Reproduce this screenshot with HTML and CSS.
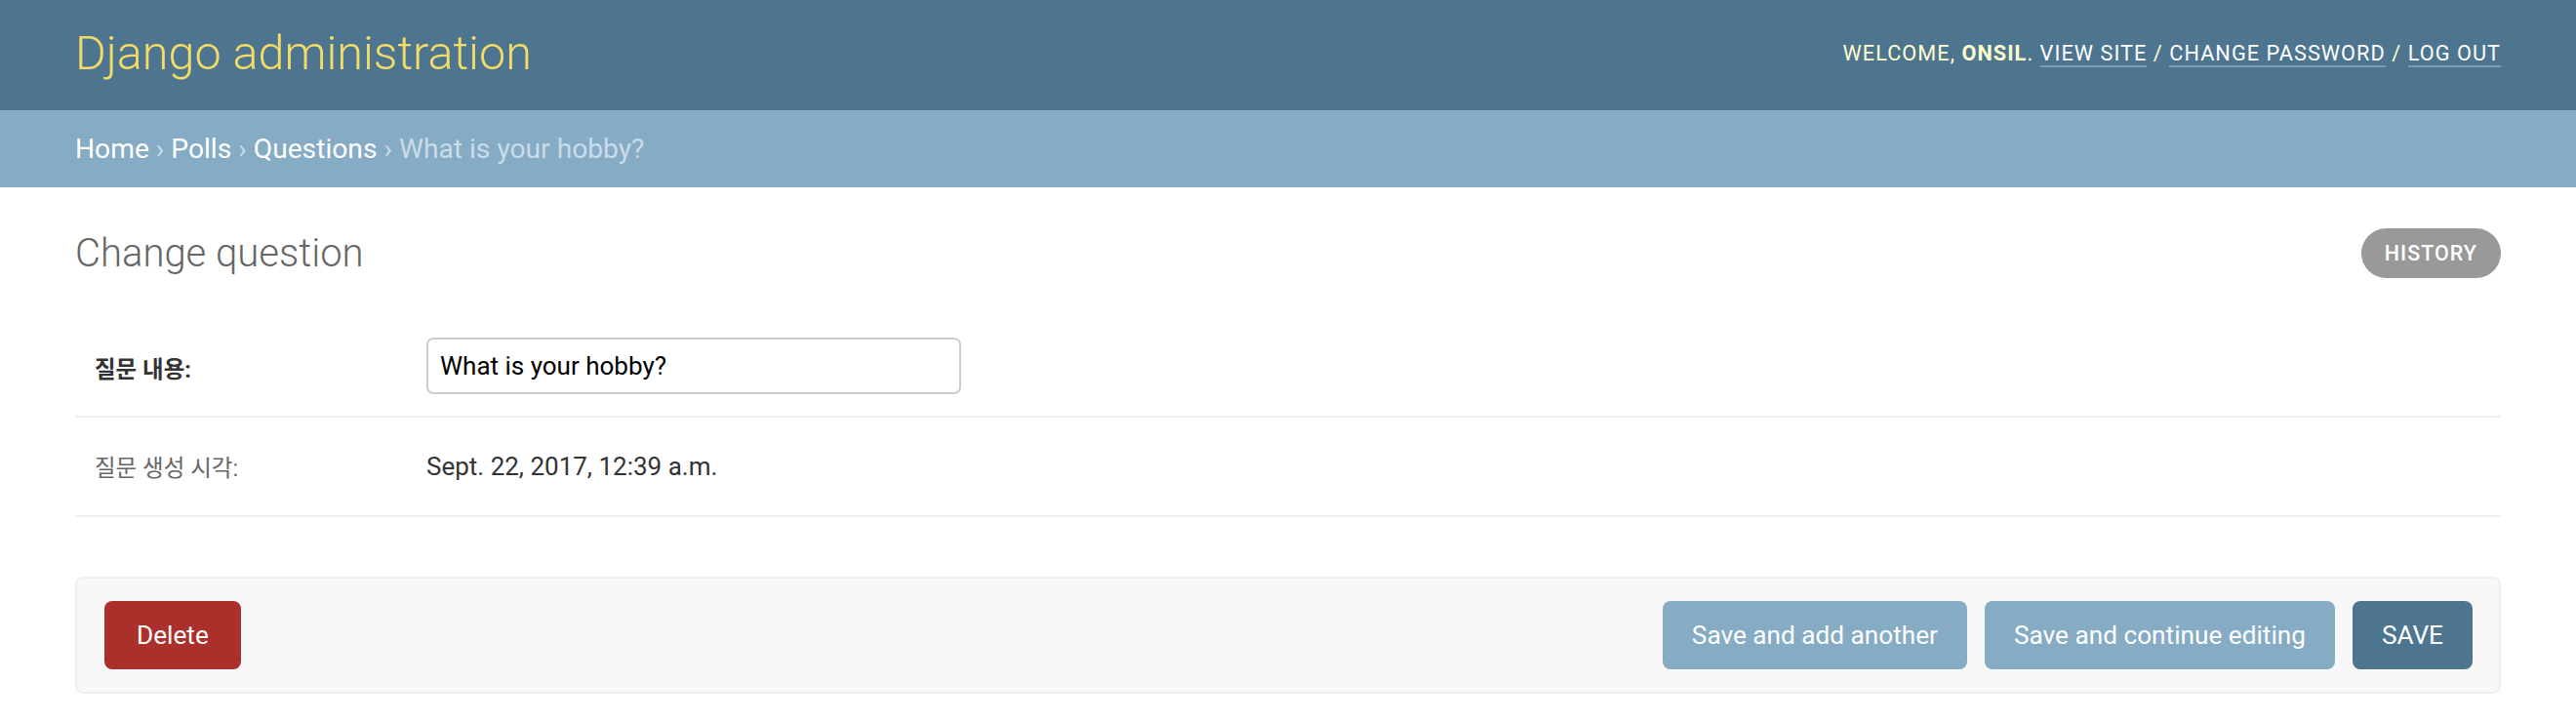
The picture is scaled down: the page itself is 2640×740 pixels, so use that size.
FILE: index.html
```html
<!DOCTYPE html>
<html lang="ko">
<head>
<meta charset="utf-8">
<title>Change question | Django site admin</title>
<link rel="stylesheet" href="styles.css">
</head>
<body>
<div class="header">
  <h1 class="branding">Django administration</h1>
  <div class="user-tools">Welcome, <strong>onsil</strong>. <a href="#">View site</a> / <a href="#">Change password</a> / <a href="#">Log out</a></div>
</div>
<div class="breadcrumbs">
  <a href="#">Home</a><span class="sep">›</span><a href="#">Polls</a><span class="sep">›</span><a href="#">Questions</a><span class="sep">›</span><span>What is your hobby?</span>
</div>
<div class="content">
  <div class="title-row">
    <h1 class="title">Change question</h1>
    <a class="history" href="#">History</a>
  </div>
  <div class="fieldset">
    <div class="form-row">
      <label class="label required" for="q">질문 내용:</label>
      <input class="text-input" id="q" type="text" value="What is your hobby?">
    </div>
    <div class="form-row">
      <span class="label">질문 생성 시각:</span>
      <span class="readonly">Sept. 22, 2017, 12:39 a.m.</span>
    </div>
  </div>
  <div class="submit-row">
    <a class="btn delete" href="#">Delete</a>
    <span class="btn light">Save and add another</span>
    <span class="btn light">Save and continue editing</span>
    <span class="btn default">SAVE</span>
  </div>
</div>
</body>
</html>
```

FILE: styles.css
```css
html, body {
  margin: 0;
  padding: 0;
}
body {
  font-family: Roboto, "Noto Sans CJK KR", sans-serif;
  color: #333;
  background: #fff;
}
.header {
  box-sizing: border-box;
  height: 113px;
  padding: 0 77px;
  background: #4d7590;
  display: flex;
  align-items: center;
  justify-content: space-between;
}
.branding {
  margin: 0 0 2px 0;
  font-size: 48.5px;
  font-weight: 300;
  line-height: 1;
  color: #f4db66;
}
.user-tools {
  margin-bottom: 4px;
  font-size: 21.7px;
  letter-spacing: 1.05px;
  text-transform: uppercase;
  color: #ffffcc;
}
.user-tools strong {
  font-weight: 700;
}
.user-tools a {
  color: #fff;
  text-decoration: none;
  border-bottom: 2px solid rgba(255, 255, 255, 0.28);
}
.breadcrumbs {
  box-sizing: border-box;
  height: 79px;
  padding: 0 77px;
  background: #85abc5;
  display: flex;
  align-items: center;
  font-size: 28.2px;
  color: #c9dce8;
}
.breadcrumbs a {
  color: #fff;
  text-decoration: none;
}
.breadcrumbs .sep {
  margin: 0 7px;
}
.content {
  padding: 38px 77px 0;
}
.title-row {
  height: 59px;
  margin-bottom: 39px;
  display: flex;
  align-items: center;
  justify-content: space-between;
}
.title {
  margin: 0;
  font-size: 40px;
  font-weight: 300;
  color: #666;
}
.history {
  box-sizing: border-box;
  height: 51px;
  padding: 0 24px;
  border-radius: 26px;
  background: #999;
  color: #fff;
  text-decoration: none;
  text-transform: uppercase;
  letter-spacing: 1px;
  font-size: 21.5px;
  font-weight: 500;
  display: flex;
  align-items: center;
}
.form-row {
  box-sizing: border-box;
  height: 100px;
  padding: 0 20px;
  border-bottom: 2px solid #eee;
  display: flex;
  align-items: center;
}
.form-row + .form-row {
  height: 102px;
}
.label {
  width: 340px;
  flex-shrink: 0;
  font-size: 23.5px;
  color: #666;
}
.label.required {
  font-weight: 700;
  color: #333;
}
.text-input {
  box-sizing: border-box;
  width: 548px;
  height: 58px;
  margin: 0 0 4px 0;
  padding: 0 12px;
  border: 2px solid #ccc;
  border-radius: 7px;
  font-family: Roboto, sans-serif;
  font-size: 26px;
  color: #000;
  background: #fff;
}
.readonly {
  font-size: 26px;
  color: #333;
}
.submit-row {
  box-sizing: border-box;
  height: 120px;
  margin-top: 61px;
  padding: 0 27px 0 28px;
  border: 2px solid #eee;
  border-radius: 8px;
  background: #f8f8f8;
  display: flex;
  align-items: center;
  gap: 18px;
}
.btn {
  box-sizing: border-box;
  height: 70px;
  padding: 0 30px;
  border-radius: 8px;
  color: #fff;
  font-size: 26.2px;
  text-decoration: none;
  display: flex;
  align-items: center;
}
.delete {
  background: #ab2f2a;
  margin-right: auto;
  padding: 0 33px;
}
.light {
  background: #85abc5;
}
.default {
  background: #4d7590;
}
```
